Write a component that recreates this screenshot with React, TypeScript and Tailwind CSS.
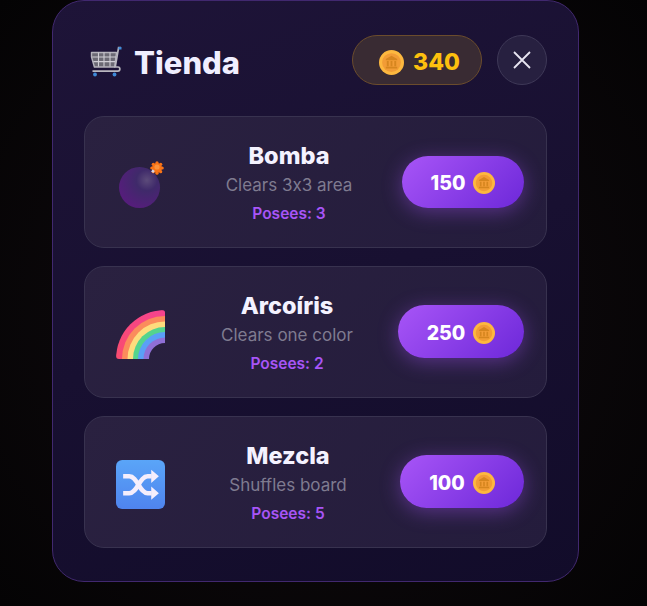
import React from 'react';

const font = { fontFamily: 'Inter, "Noto Sans", sans-serif' };

function Coin({ size = 24 }: { size?: number }) {
  return (
    <svg width={size} height={size} viewBox="0 0 24 24" className="shrink-0">
      <circle cx="12" cy="12" r="12" fill="#fdb83f" />
      <circle cx="12" cy="12" r="9" fill="#f29c36" />
      <path d="M12 5.500 6.500 8.600v1.200h11V8.600z" fill="#d6861f" />
      <path d="M7.500 10.500h1.800v5H7.500zM11.100 10.500h1.800v5h-1.800zM14.700 10.500h1.800v5h-1.800zM6.500 16h11v1.800h-11z" fill="#d6861f" />
    </svg>
  );
}

function CartIcon() {
  return (
    <svg width="34" height="34" viewBox="0 0 34 34" className="shrink-0">
      <path d="M1.500 6.500h25l-1.800 14.500H4.400L1.500 11z" fill="#6c6a74" stroke="#b5b3bb" strokeWidth="1.400" strokeLinejoin="round" />
      <path d="M2.200 11h23.800M3.400 15.600h22M8.500 6.500v14M14 6.500v14M20 6.500v14" stroke="#cfcdd4" strokeWidth="1.100" fill="none" />
      <path d="M31 1.500h-2.400l-3.400 19.500h2.800c2.400 0 2.600 4.200-.2 4.200H2.500" stroke="#b9b7bf" strokeWidth="1.700" fill="none" />
      <path d="M28.500 1h3v2.500h-3z" fill="#3f8ad8" />
      <circle cx="5" cy="28.500" r="1.900" fill="#3f8ad8" />
      <circle cx="24.500" cy="28.500" r="1.900" fill="#3f8ad8" />
    </svg>
  );
}

function BombIcon() {
  return (
    <svg width="48" height="48" viewBox="0 0 48 48" className="overflow-visible">
      <defs>
        <radialGradient id="bomb" cx="0.68" cy="0.32" r="0.85">
          <stop offset="0" stopColor="#5c4b7a" />
          <stop offset="0.3" stopColor="#3f2a6a" />
          <stop offset="1" stopColor="#5b1a80" />
        </radialGradient>
      </defs>
      <circle cx="23.500" cy="27.500" r="20.500" fill="url(#bomb)" />
      <g fill="#f97316">
        <circle cx="41" cy="8" r="5" />
        <circle cx="41" cy="2.800" r="1.600" />
        <circle cx="41" cy="13.200" r="1.600" />
        <circle cx="35.800" cy="8" r="1.600" />
        <circle cx="46.200" cy="8" r="1.600" />
        <circle cx="37.300" cy="4.300" r="1.600" />
        <circle cx="44.700" cy="4.300" r="1.600" />
        <circle cx="37.300" cy="11.700" r="1.600" />
        <circle cx="44.700" cy="11.700" r="1.600" />
      </g>
      <circle cx="41" cy="7" r="2.600" fill="#fb923c" />
      <path d="M36.600 9.200l2.200 1.800-1.500 2-2.200-1.600z" fill="#d8d4e4" />
    </svg>
  );
}

function RainbowIcon() {
  return (
    <svg width="49" height="49" viewBox="0 0 49 49">
      <defs>
        <linearGradient id="outer" x1="1" y1="0" x2="0" y2="1">
          <stop offset="0" stopColor="#f53f9f" />
          <stop offset="1" stopColor="#f9505f" />
        </linearGradient>
        <clipPath id="rb">
          <path d="M0 46V45C0 20 20 0 46 0c2 0 3 1 3 2.500V49H3c-2 0-3-1-3-3z" />
        </clipPath>
        <mask id="hole">
          <rect width="49" height="49" fill="white" />
          <circle cx="49" cy="49" r="16" fill="black" />
        </mask>
      </defs>
      <g clipPath="url(#rb)" mask="url(#hole)">
        <circle cx="49" cy="49" r="49" fill="url(#outer)" />
        <circle cx="49" cy="49" r="43" fill="#fb8c5c" />
        <circle cx="49" cy="49" r="37.500" fill="#fedc7d" />
        <circle cx="49" cy="49" r="32" fill="#54d48d" />
        <circle cx="49" cy="49" r="27" fill="#5aa0f6" />
        <circle cx="49" cy="49" r="21.500" fill="#8f6fd6" />
      </g>
    </svg>
  );
}

function ShuffleIcon() {
  return (
    <svg width="49" height="49" viewBox="0 0 48 48">
      <defs>
        <linearGradient id="sh" x1="0" y1="0" x2="0" y2="1">
          <stop offset="0" stopColor="#5aa5f8" />
          <stop offset="1" stopColor="#4f84ee" />
        </linearGradient>
      </defs>
      <rect x="0" y="0" width="48" height="48" rx="6" fill="url(#sh)" />
      <path d="M7 16h6c8 0 10 16.500 18 16.500h4M7 32.500h6c8 0 10-16.500 18-16.500h4" stroke="#f5eefc" strokeWidth="4.400" fill="none" />
      <path d="M34.500 9.500l7.500 6.500-7.500 6.500zM34.500 26l7.500 6.500-7.500 6.500z" fill="#f5eefc" />
    </svg>
  );
}

function XIcon() {
  return (
    <svg width="18" height="18" viewBox="0 0 18 18">
      <path d="M1 1l16 16M17 1L1 17" stroke="#e8e6f2" strokeWidth="1.800" fill="none" />
    </svg>
  );
}

interface Item {
  name: string;
  desc: string;
  owned: number;
  price: number;
  icon: React.ReactNode;
  btn: string;
}

const items: Item[] = [
  { name: 'Bomba', desc: 'Clears 3x3 area', owned: 3, price: 150, icon: <BombIcon />, btn: 'w-[122px] h-[52px]' },
  { name: 'Arcoíris', desc: 'Clears one color', owned: 2, price: 250, icon: <RainbowIcon />, btn: 'w-[126px] h-[53px]' },
  { name: 'Mezcla', desc: 'Shuffles board', owned: 5, price: 100, icon: <ShuffleIcon />, btn: 'w-[124px] h-[53px]' },
];

function ShopCard({ item }: { item: Item }) {
  return (
    <div className="flex h-[131.5px] items-center rounded-[20px] border border-[#38324f] bg-[linear-gradient(135deg,#2a2140,#241c3c)] pl-[31px] pr-[22px]">
      <div className="mt-[5px] w-[60px] shrink-0">{item.icon}</div>
      <div className="flex flex-1 flex-col items-center pt-[2px]">
        <div className="text-[23.5px] font-extrabold leading-[30px] text-[#f4f2ff]">{item.name}</div>
        <div className="mt-[3px] text-[17px] leading-[22px] text-[#7f7b90] [font-feature-settings:'calt'_0]">{item.desc}</div>
        <div className="mt-[8px] text-[15.5px] font-semibold leading-[20px] text-[#a855f7]">Posees: {item.owned}</div>
      </div>
      <button className={`flex shrink-0 items-center justify-center gap-2 rounded-full bg-[linear-gradient(135deg,#a855f7,#6d28d9)] pt-[3px] shadow-[0_4px_20px_rgba(168,85,247,0.4)] ${item.btn}`}>
        <span className="text-[19.5px] font-extrabold text-white">{item.price}</span>
        <Coin size={22} />
      </button>
    </div>
  );
}

export default function App() {
  return (
    <div style={font} className="flex h-[606px] justify-center overflow-hidden bg-[radial-gradient(circle_at_center,#120c10,#040304)] pr-4">
      <div className="h-[582px] w-[527px] rounded-[32px] border border-[#41286f] bg-[linear-gradient(160deg,#1e1438,#120c2a)] px-[31px] pt-[34px]">
        <div className="flex h-[50px] items-center">
          <div className="ml-[6px] mt-[5px] flex items-center">
            <CartIcon />
            <h1 className="ml-[10px] text-[31px] font-extrabold leading-none text-[#f0eeff]">Tienda</h1>
          </div>
          <div className="ml-auto flex h-[50px] w-[130px] items-center justify-center gap-[9px] rounded-full border border-[#6b4c2c] bg-[#392b33] pl-[5px] pt-[5px]">
            <Coin size={25} />
            <span className="text-[23px] font-extrabold leading-none text-[#fdc00e]">340</span>
          </div>
          <button className="ml-[15px] flex h-[50px] w-[50px] items-center justify-center rounded-full border border-[#3e3857] bg-[#272040]">
            <XIcon />
          </button>
        </div>
        <div className="mt-[31px] flex flex-col gap-[18.5px]">
          {items.map((item) => (
            <ShopCard key={item.name} item={item} />
          ))}
        </div>
      </div>
    </div>
  );
}
